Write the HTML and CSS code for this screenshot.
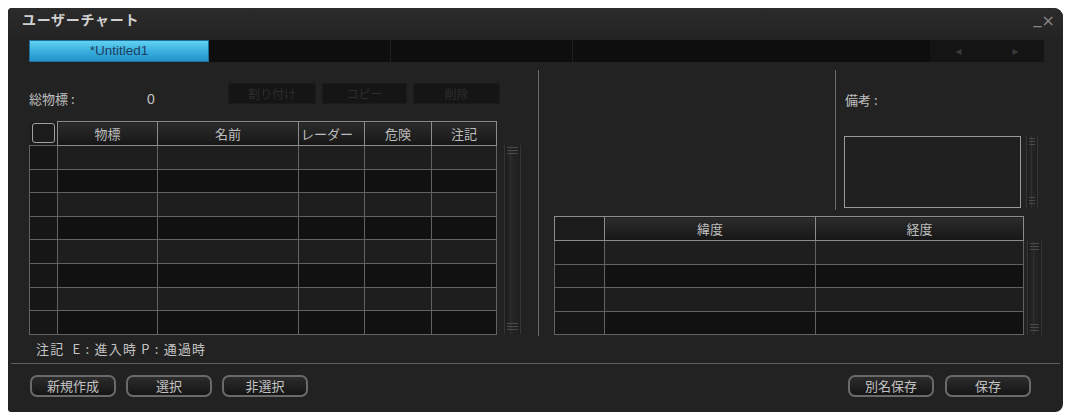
FILE: index.html
```html
<!DOCTYPE html>
<html lang="ja">
<head>
<meta charset="utf-8">
<title>ユーザーチャート</title>
<link rel="stylesheet" href="styles.css">
</head>
<body>
<div class="win">
  <div class="titlebar">
    <div class="title">ユーザーチャート</div>
    <div class="winctl"><span class="min">_</span><span class="close">×</span></div>
  </div>
  <div class="tabbar">
    <div class="tab active">*Untitled1</div>
    <div class="tab"></div>
    <div class="tab"></div>
    <div class="tabspace"></div>
    <div class="tabnav">◂</div>
    <div class="tabnav">▸</div>
  </div>
  <div class="main">
    <div class="left">
      <div class="toolbar">
        <span class="lbl">総物標 :</span>
        <span class="count">0</span>
        <div class="dbtns">
          <span class="dbtn w86">割り付け</span>
          <span class="dbtn w83">コピー</span>
          <span class="dbtn w85">削除</span>
        </div>
      </div>
      <div class="tablerow">
        <table class="grid lefttable">
          <colgroup><col class="c1"><col class="c2"><col class="c3"><col class="c4"><col class="c5"><col class="c6"></colgroup>
          <thead><tr><th><span class="chk"></span></th><th>物標</th><th>名前</th><th>レーダー</th><th>危険</th><th>注記</th></tr></thead>
          <tbody>
            <tr><td></td><td></td><td></td><td></td><td></td><td></td></tr>
            <tr><td></td><td></td><td></td><td></td><td></td><td></td></tr>
            <tr><td></td><td></td><td></td><td></td><td></td><td></td></tr>
            <tr><td></td><td></td><td></td><td></td><td></td><td></td></tr>
            <tr><td></td><td></td><td></td><td></td><td></td><td></td></tr>
            <tr><td></td><td></td><td></td><td></td><td></td><td></td></tr>
            <tr><td></td><td></td><td></td><td></td><td></td><td></td></tr>
            <tr><td></td><td></td><td></td><td></td><td></td><td></td></tr>
          </tbody>
        </table>
        <div class="scroll sc-left"><span class="thumb top"></span><span class="thumb bot"></span></div>
      </div>
      <div class="note">注記&nbsp; E : 進入時 P : 通過時</div>
    </div>
    <div class="vdiv"></div>
    <div class="right">
      <div class="rtop">
        <div class="spacer"></div>
        <div class="remarks">
          <div class="rlbl">備考 :</div>
          <div class="rbox">
            <div class="memo"></div>
            <div class="scroll sc-memo"><span class="thumb top"></span><span class="thumb bot"></span></div>
          </div>
        </div>
      </div>
      <div class="tablerow rrow">
        <table class="grid righttable">
          <colgroup><col class="r1"><col class="r2"><col class="r3"></colgroup>
          <thead><tr><th></th><th>緯度</th><th>経度</th></tr></thead>
          <tbody>
            <tr><td></td><td></td><td></td></tr>
            <tr><td></td><td></td><td></td></tr>
            <tr><td></td><td></td><td></td></tr>
            <tr><td></td><td></td><td></td></tr>
          </tbody>
        </table>
        <div class="scroll sc-right"><span class="thumb top"></span><span class="thumb bot"></span></div>
      </div>
    </div>
  </div>
  <div class="hr"></div>
  <div class="footer">
    <div class="fgroup">
      <span class="btn">新規作成</span>
      <span class="btn">選択</span>
      <span class="btn">非選択</span>
    </div>
    <div class="fgroup gap11">
      <span class="btn">別名保存</span>
      <span class="btn">保存</span>
    </div>
  </div>
</div>
</body>
</html>
```

FILE: styles.css
```css
html, body {
  margin: 0;
  padding: 0;
  background: #ffffff;
}
body {
  font-family: "Noto Sans CJK JP", "Noto Sans", sans-serif;
  color: #c2c2c2;
  font-size: 13px;
}
.win {
  margin: 8px 0 0 8px;
  width: 1055px;
  height: 404px;
  background: #222222;
  border-radius: 4px 9px 8px 3px;
  display: flex;
  flex-direction: column;
  overflow: hidden;
}
.titlebar {
  height: 32px;
  display: flex;
  justify-content: space-between;
  align-items: flex-start;
  background: linear-gradient(#2b2b2b, #232323);
}
.title {
  margin: 3px 0 0 14px;
  font-size: 14px;
  font-weight: bold;
  letter-spacing: 0.7px;
  line-height: 16px;
  color: #d0d0d0;
}
.winctl {
  margin: 4px 8px 0 0;
  color: #858585;
  font-family: "DejaVu Sans", sans-serif;
  font-size: 16px;
  line-height: 18px;
  display: flex;
  gap: 0;
}
.winctl .min { position: relative; top: -3px; }
.tabbar {
  margin: 0 19px 0 21px;
  height: 22px;
  background: #0e0e0e;
  display: flex;
}
.tab {
  width: 182px;
  border-right: 1px solid #1f1f1f;
  box-sizing: border-box;
}
.tab.active {
  width: 180px;
  background: linear-gradient(#62d2f2, #34a9dc 60%, #2692c8);
  border: 1px solid #1e6f9b;
  color: #1c3f5e;
  font-family: "Liberation Sans", sans-serif;
  font-size: 13.5px;
  line-height: 20px;
  text-align: center;
}
.tabspace { flex: 1; }
.tabnav {
  width: 57px;
  background: #141414;
  color: #3a3a3a;
  text-align: center;
  font-family: "DejaVu Sans", sans-serif;
  font-size: 12px;
  line-height: 22px;
}
.main {
  height: 301px;
  display: flex;
  padding-left: 21px;
}
.left {
  width: 492px;
  display: flex;
  flex-direction: column;
}
.toolbar {
  margin-top: 21px;
  height: 21px;
  display: flex;
  align-items: flex-end;
}
.lbl {
  width: 118px;
  line-height: 16px;
  margin-bottom: -3px;
  color: #c0c0c0;
}
.count {
  width: 81px;
  line-height: 16px;
  margin-bottom: -3px;
  font-family: "Liberation Sans", sans-serif;
  font-size: 14px;
}
.dbtns {
  display: flex;
  gap: 6px;
  align-self: stretch;
}
.dbtn {
  background: #151515;
  border: 1px solid #1b1b1b;
  color: #2e2e2e;
  font-size: 12px;
  text-align: center;
  line-height: 19px;
}
.w86 { width: 86px; }
.w83 { width: 83px; }
.w85 { width: 85px; }
.tablerow {
  display: flex;
  margin-top: 17px;
}
.grid {
  border-collapse: collapse;
  table-layout: fixed;
}
.grid th {
  height: 24px;
  padding: 0;
  box-sizing: border-box;
  background: linear-gradient(#2c2c2c, #161616);
  border: 1px solid #8c8c8c;
  border-radius: 3px;
  font-weight: normal;
  font-size: 13px;
  color: #bdbdbd;
  line-height: 20px;
  text-align: center;
}
.grid td {
  height: 23.6px;
  padding: 0;
  box-sizing: border-box;
  border: 1px solid #626262;
}
.grid tbody tr:nth-child(odd) td { background: #1e1e1e; }
.grid tbody tr:nth-child(even) td { background: #111111; }
.grid tbody td:first-child { background: #161616 !important; }
.lefttable { width: 467px; }
.c1 { width: 28px; }
.c2 { width: 100px; }
.c3 { width: 141px; }
.c4 { width: 66px; }
.c5 { width: 67px; }
.c6 { width: 65px; }
.lefttable th:nth-child(4) { text-align: left; padding-left: 2px; }
.chk {
  display: block;
  margin: 1px 2px;
  height: 20px;
  border: 1px solid #a0a0a0;
  border-radius: 3px;
  box-sizing: border-box;
}
.lefttable th:first-child { border: none; background: #1b1b1b; }
.scroll {
  position: relative;
  box-sizing: border-box;
  border-left: 1px solid #353535;
  border-right: 1px solid #353535;
  background: linear-gradient(to right, #1d1d1d, #262626 40%, #1f1f1f);
}
.scroll::after {
  content: "";
  position: absolute;
  left: 35%;
  top: 0;
  bottom: 0;
  width: 1px;
  background: #303030;
}
.thumb {
  position: absolute;
  left: 2px;
  right: 2px;
  height: 9px;
  background: repeating-linear-gradient(to bottom, #4a4a4a 0 1px, transparent 1px 3px);
  z-index: 1;
}
.thumb.top { top: 2px; }
.thumb.bot { bottom: 2px; }
.sc-left {
  margin: 24px 0 0 7px;
  width: 17px;
  height: 189px;
}
.note {
  margin-top: 6px;
  padding-left: 7px;
  line-height: 16px;
  font-size: 13px;
  letter-spacing: 1.2px;
  color: #c4c4c4;
}
.vdiv {
  margin: 8px 0 0 17px;
  width: 1px;
  height: 266px;
  background: #6c6c6c;
}
.right {
  flex: 1;
  padding-left: 15px;
  display: flex;
  flex-direction: column;
}
.rtop {
  height: 148px;
  display: flex;
  margin-left: -15px;
}
.spacer { flex: 1; }
.remarks {
  width: 228px;
  margin-top: 8px;
  border-left: 1px solid #6c6c6c;
  padding-left: 8px;
  box-sizing: border-box;
}
.rlbl {
  margin-top: 22px;
  padding-left: 1px;
  line-height: 16px;
  color: #c0c0c0;
}
.rbox {
  margin-top: 28px;
  display: flex;
}
.memo {
  width: 177px;
  height: 72px;
  box-sizing: border-box;
  border: 1px solid #9a9a9a;
  background: #202020;
}
.sc-memo {
  margin-left: 5px;
  width: 12px;
  height: 72px;
}
.rrow { margin-top: 6px; }
.righttable { width: 469px; }
.r1 { width: 50px; }
.r2 { width: 211px; }
.r3 { width: 208px; }
.righttable th:first-child { background: #1b1b1b; }
.sc-right {
  margin: 25px 0 0 3px;
  width: 15px;
  height: 94px;
}
.hr {
  margin: 0 3px;
  height: 1px;
  background: #5c5c5c;
}
.footer {
  padding: 11px 32px 0 22px;
  display: flex;
  justify-content: space-between;
}
.fgroup {
  display: flex;
  gap: 10px;
}
.fgroup.gap11 { gap: 11px; }
.btn {
  width: 86px;
  height: 22px;
  box-sizing: border-box;
  border: 2px solid #6a6a6a;
  border-radius: 7px;
  background: linear-gradient(#2c2c2c, #151515);
  color: #c2c2c2;
  font-size: 13px;
  line-height: 18px;
  text-align: center;
}
```
